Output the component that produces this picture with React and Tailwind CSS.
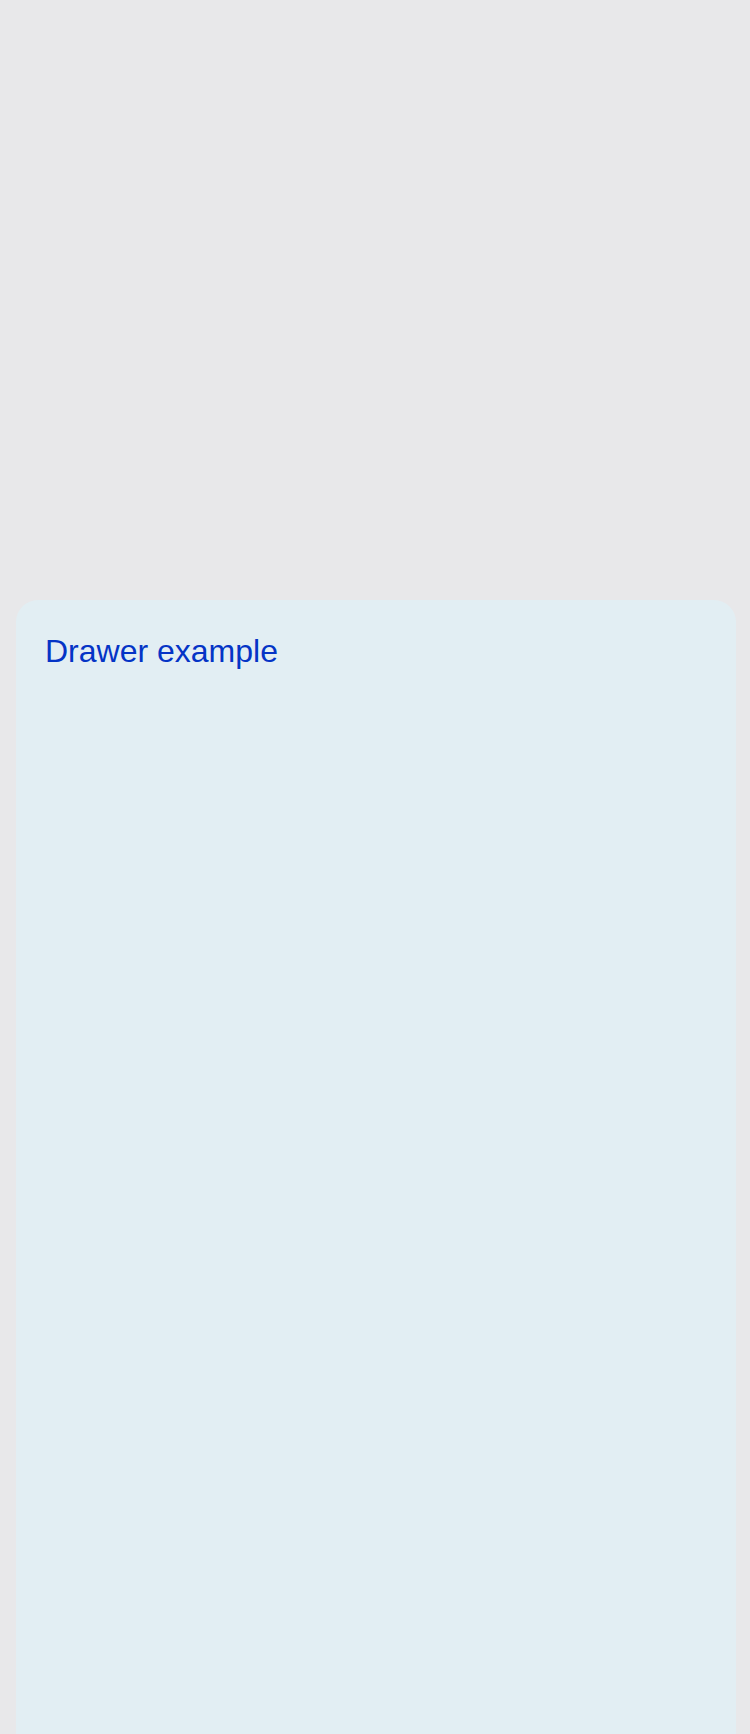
export default function App() {
  return (
    <div
      className="w-full h-[1734px] bg-[#e8e8ea] flex flex-col overflow-hidden"
      style={{ fontFamily: '"Liberation Sans", Arial, sans-serif' }}
    >
      <div className="h-[600px] shrink-0" />
      <div className="flex-1 ml-[16px] mr-[14px] rounded-t-[22px] bg-[#e2eef3] pl-[29px] pt-[33px]">
        <h1 className="text-[32px] leading-[normal] font-normal text-[#0434c6]">Drawer example</h1>
      </div>
    </div>
  );
}
